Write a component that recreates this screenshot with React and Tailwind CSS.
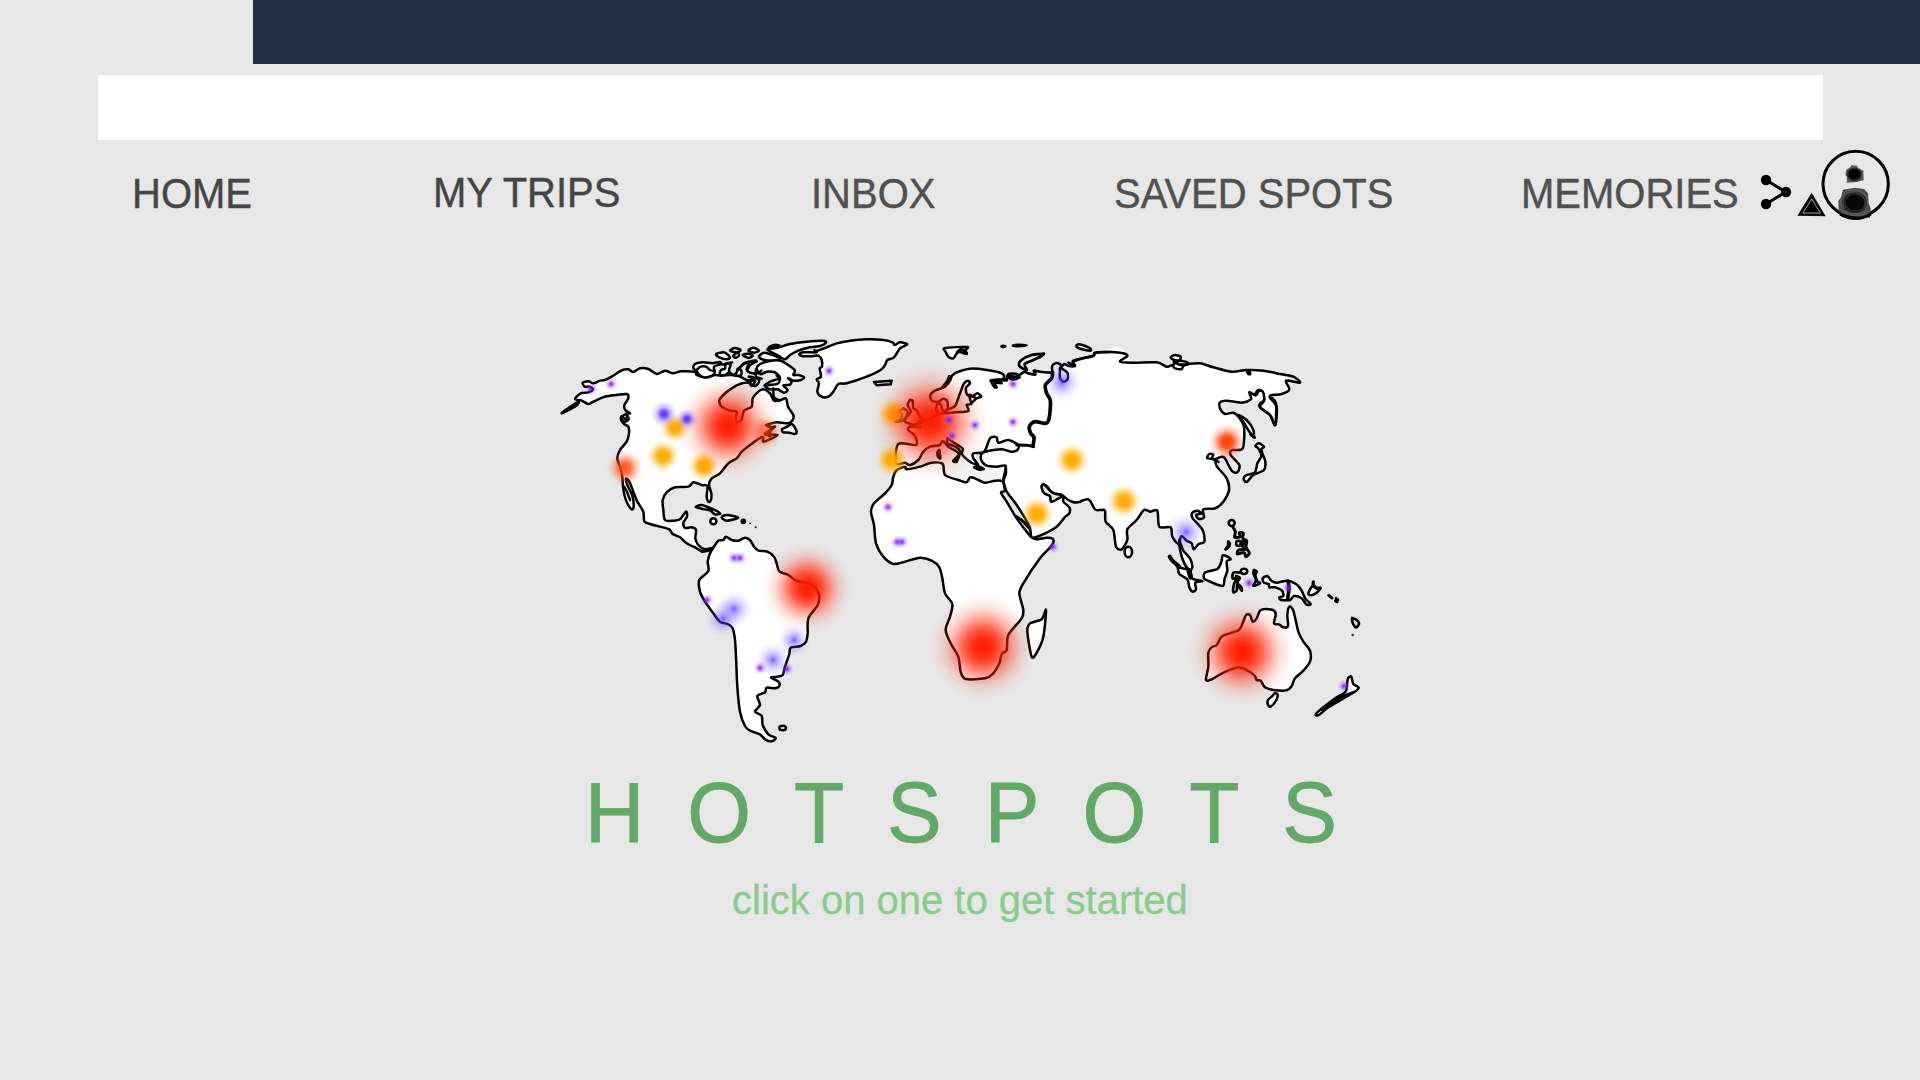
import React from "react";

/* Turns "x,y x,y ..." into a smooth path that passes through every point. */
function smooth(points, closed) {
  const p = points
    .trim()
    .split(/\s+/)
    .map((s) => s.split(",").map(Number));
  const n = p.length;
  const at = (i) => (closed ? p[(i + n) % n] : p[Math.max(0, Math.min(n - 1, i))]);
  let d = `M${p[0][0]} ${p[0][1]}`;
  const last = closed ? n : n - 1;
  const k = 7;
  for (let i = 0; i < last; i++) {
    const a = at(i - 1);
    const b = at(i);
    const c = at(i + 1);
    const e = at(i + 2);
    d += `C${b[0] + (c[0] - a[0]) / k} ${b[1] + (c[1] - a[1]) / k} ${c[0] - (e[0] - b[0]) / k} ${c[1] - (e[1] - b[1]) / k} ${c[0]} ${c[1]}`;
  }
  return closed ? d + "Z" : d;
}

const Land = ({ p }) => <path d={smooth(p, true)} fill="#fff" />;
const Area = ({ p }) => <path d={smooth(p, true)} fill="#fff" stroke="none" />;
const Sea = ({ p, c = "#e7e7e7" }) => <path d={smooth(p, true)} fill={c} stroke="none" />;
const Line = ({ p, w = 7.5 }) => <path d={smooth(p, false)} fill="none" strokeWidth={w} />;
const Ink = ({ p }) => <path d={smooth(p, true)} fill="#000" />;

/* Each map region is drawn on its own triple-size grid. */
const Region = ({ x, y, children }) => (
  <g transform={`translate(${x} ${y}) scale(0.33333)`} stroke="#000" strokeWidth="7.5" strokeLinejoin="round" strokeLinecap="round">
    {children}
  </g>
);

function NorthAmerica() {
  return (
    <>
      <Region x={550} y={330}>
        <Land p="75,207 92,190 115,187 129,178 118,170 104,170 98,158 115,154 130,160 150,152 165,150 185,140 215,121 235,118 250,126 270,115 295,117 320,132 345,122 368,130 395,124 435,126 440,135 465,142 490,135 515,137 545,135 570,140 590,150 615,152 605,168 596,158 570,162 545,175 520,195 508,212 515,230 540,242 560,245 557,266 563,277 575,268 582,242 605,230 608,205 625,185 640,178 660,190 672,212 692,210 708,205 714,230 730,255 728,270 715,280 680,277 650,285 665,292 675,290 661,303 660,313 683,315 665,325 640,335 640,322 628,325 600,345 575,365 560,385 535,400 510,430 485,445 477,465 484,490 482,512 475,515 470,500 472,468 455,465 430,457 415,470 375,472 350,487 338,510 340,540 345,570 370,572 390,568 408,545 411,560 400,578 405,594 425,592 438,600 436,625 445,645 465,658 490,653 475,662 455,663 440,655 410,640 390,622 368,612 358,598 330,590 300,582 283,574 280,545 262,515 250,485 238,455 228,446 232,465 247,498 251,530 245,538 232,520 224,498 219,470 217,440 212,415 202,385 210,360 230,335 237,310 235,290 222,282 213,270 215,258 228,270 232,252 240,250 226,240 223,225 235,205 230,192 200,195 165,200 130,215 115,222 95,212" />
        <Ink p="35,250 50,238 85,216 80,226 60,238" />
        <Line p="230,250 214,262 222,275 236,268 230,252" />
        <Line p="222,470 232,488 240,510" />
        <Line p="650,285 665,295 655,305 645,312 660,318" w={9} />
        <Land p="696,298 712,290 724,282 733,290 740,307 733,312 718,308 700,307" />
        <Land p="437,531 455,525 480,534 500,543 511,551 495,553 480,541 455,536" />
        <Land p="515,562 530,555 565,563 530,572" />
        <circle cx="490" cy="574" r="9" fill="#fff" />
        <circle cx="580" cy="574" r="5" />
        <circle cx="600" cy="580" r="1" strokeWidth="3" />
        <circle cx="617" cy="592" r="1" strokeWidth="4" />
      </Region>
      <Region x={670} y={320}>
        <Land p="80,153 70,145 75,132 100,127 128,130 148,126 153,132 132,140 134,158 125,168 100,172 85,162" />
        <Line p="82,148 92,140 108,140 120,150 134,153" />
        <Land p="150,165 153,150 165,146 167,131 182,131 177,152 187,164 200,158 203,146 214,152 212,166 190,165 175,158 168,164" />
        <Line p="150,133 165,133 186,127" />
        <Line p="205,148 220,132 240,125 258,122" w={9} />
        <Land p="150,98 165,98 180,112 170,118 148,112 138,103" />
        <Land p="180,92 195,84 212,90 200,97" />
        <Land p="190,107 205,97 206,108 196,113" />
        <Land p="235,92 250,83 267,92 252,98" />
        <Land p="218,105 235,101 248,107 235,114" />
        <Land p="293,87 320,84 360,72 410,65 460,62 468,68 450,78 420,82 385,92 360,105 345,118 325,107 300,94" />
        <Ink p="296,82 312,75 328,76 312,84" />
        <Land p="270,105 283,98 305,104 330,117 310,122 280,119 267,112" />
        <Land p="262,152 263,138 280,128 302,122 332,122 350,132 362,140 375,152 370,165 385,165 402,172 392,180 370,182 354,174 364,184 360,194 340,196 353,210 342,218 322,208 300,208 284,198 300,195 322,192 330,178 326,166 312,156 290,155 272,163" />
        <Line p="284,196 302,184 326,176 320,166" />
        <Line p="232,150 240,136 260,124" />
        <Line p="236,132 230,148 240,158 262,160 274,152" />
        <Line p="236,170 250,176 240,190 256,198 268,182 250,172 236,170" />
        <Line p="258,148 258,170 275,176" />
        <Line p="310,205 312,232 330,242" />
        <Land p="440,93 470,82 500,70 540,62 590,58 640,60 668,67 674,75 690,67 712,73 690,85 672,112 652,120 645,135 632,150 590,170 530,190 505,192 490,215 475,230 455,230 442,215 447,190 440,178 453,170 449,145 456,140 455,120 445,107 420,109 395,108 388,103 400,97 440,97 433,90" />
        <path d="M612 186L665 182L662 193L620 196Z" fill="#e7e7e7" />
      </Region>
    </>
  );
}

function SouthAmerica() {
  return (
    <Region x={680} y={500}>
      <Line p="66,155 85,150 100,146" w={9} />
      <Land p="100,143 115,122 130,120 138,110 155,120 175,122 195,113 210,120 222,140 235,152 262,155 282,170 290,190 298,214 325,225 350,243 385,250 405,262 417,285 413,315 385,355 383,400 378,425 362,438 332,443 328,462 315,500 308,525 290,530 273,533 295,545 298,558 285,565 260,563 255,577 232,588 240,615 225,635 245,648 248,675 265,703 287,714 275,724 255,718 240,703 210,692 195,678 180,635 172,560 168,470 165,420 158,385 145,373 120,365 100,340 75,305 60,275 58,240 85,213 83,185 90,160" />
      <ellipse cx="308" cy="684" rx="10" ry="7" fill="#e7e7e7" />
    </Region>
  );
}

function Africa() {
  return (
    <Region x={860} y={450}>
      <Sea c="#f1f1f1" p="140,58 180,48 215,38 248,20 300,-10 350,30 380,42 437,48 430,95 405,92 375,98 345,85 330,82 320,97 255,75 240,60" />
      <Land p="135,50 110,60 100,80 95,105 75,130 42,160 33,185 42,225 48,280 70,320 100,342 135,335 180,323 215,332 238,352 247,385 255,430 277,462 270,500 257,540 272,580 295,620 302,665 317,687 375,685 400,670 418,640 425,612 440,600 445,555 485,505 490,480 478,430 490,400 540,325 570,293 580,278 578,266 560,263 530,268 515,262 500,245 470,205 440,155 423,128 434,122 430,95 405,92 375,98 345,85 330,82 320,97 295,90 255,75 248,42 215,38 180,50 140,58" />
      <Land p="558,480 545,508 510,520 502,545 515,620 530,608 550,560" />
    </Region>
  );
}

function EuropeLand() {
  return (
    <Region x={860} y={330}>
      <Area p="265,140 280,130 330,115 380,120 430,132 440,145 490,125 575,125 640,95 700,80 800,70 900,400 640,520 437,450 437,408 410,410 375,405 362,385 365,370 385,363 472,360 475,345 445,330 415,338 410,322 390,325 375,355 350,370 345,400 320,388 305,352 255,330 210,350 190,365 175,390 150,405 108,400 115,342 168,345 165,318 145,300 178,292 230,255 270,200 225,182 255,170" />
      <Sea p="275,240 290,225 300,190 318,153 330,160 318,175 335,200 350,195 322,220 322,242 290,248" />
      <Sea c="#f3f3f3" p="385,363 390,325 410,322 415,338 445,330 475,345 472,360 455,365 425,358" />
    </Region>
  );
}

function EuropeCoast() {
  return (
    <Region x={860} y={330}>
      <Line p="275,138 290,127 330,116 380,120 425,130 432,143 415,155 393,150 402,170 410,172 404,158 425,160" />
      <Line p="393,152 412,150 440,150" w={10} />
      <Line p="440,148 446,132 470,132 478,143 455,148 445,138 470,140 492,126 505,130 526,134 522,122 545,126 577,128" w={8} />
      <Line p="275,138 270,152 255,170 225,182 211,195 215,212 235,216 250,206 262,215 262,238 248,242 243,225 232,222 230,244 250,250 290,247 325,243 320,225 332,222 348,206 364,200 352,190 338,198 328,195 334,222" />
      <Line p="268,140 262,155 248,172" w={10} />
      <Line p="262,238 285,228 300,190 312,160 324,152 330,160 318,174 322,195 345,202" />
      <Line p="245,250 225,258 190,275 178,283 182,292 150,290 145,300 165,318 168,345 115,342 108,400 135,398 150,405 175,390 190,365 210,350 240,345 248,333 265,350 290,365 298,378 285,395" />
      <Line p="262,325 285,340 308,356 306,372 330,395 355,405 340,385 340,370 372,366 390,325 410,322 415,338 445,330 475,345 472,360 455,365 425,358 385,363 366,370 363,388 378,406 410,410 437,408 430,450 437,478" />
      <Line p="262,325 262,340 290,352 300,370 280,392 290,395 296,380" w={8} />
      <Line p="470,345 500,346 521,350" w={9} />
      <Line p="578,128 575,145 556,165 560,190 571,212 568,262 558,280 524,275 508,290 512,310 522,322 519,348" w={11} />
      <Line p="578,130 576,110 585,100 600,102 604,112 612,102 626,108 645,108 640,95 665,86 700,78 706,68 750,66" />
      <Line p="600,115 600,145 612,155 623,147 622,128 606,116" />
      <Ink p="232,368 238,360 241,385 234,380" />
      <Ink p="342,412 357,410 372,417 358,419" />
      <Line p="150,210 143,225 153,245 140,260 135,275 165,284 187,268 178,258 170,240 160,235 158,212 150,210" />
      <Line p="130,235 118,245 126,255 120,268 108,275 128,272 140,258 142,244 130,235" />
      <Land p="255,54 322,51 316,60 320,72 300,66 290,70 280,85 265,80 257,66" />
      <Line p="292,66 305,58 318,68" w={9} />
      <Ink p="424,49 430,47 436,49 430,51" />
      <Ink p="458,47 475,44 500,46 475,49" />
      <Land p="650,45 665,44 690,55 692,62 675,60 652,52" />
      <Line p="552,71 515,75 482,92 478,108 500,120 494,102 520,90 545,78 552,71" w={8} />
    </Region>
  );
}

function Asia() {
  return (
    <>
      <Region x={1040} y={340}>
        <Area p="62,85 105,75 160,47 215,36 262,45 240,65 350,67 380,80 480,70 575,95 670,92 780,128 740,122 748,148 692,168 600,190 540,187 540,205 595,235 612,260 608,325 575,330 530,355 525,372 560,415 567,450 525,505 490,510 460,520 493,605 460,628 445,602 420,590 397,590 392,560 358,560 352,512 312,510 262,565 245,628 228,620 220,570 195,512 165,510 145,478 105,487 70,468 0,540 -120,400 -30,150 20,130" />
        <Land p="690,168 708,190 705,255 690,225 660,202 672,182 668,158 655,150 648,166 700,160" />
        <Area p="600,190 640,165 670,155 740,150 690,172 672,176" />
        <Line p="85,68 104,76 100,62 160,47 165,38 215,36 250,40 262,48 240,65 280,68 350,67 380,80 400,75 440,72 480,70 520,82 575,95 620,90 670,92 720,102 760,110 780,128 738,122 748,148 725,162 692,166 692,176 710,200 706,255 690,225 660,202 660,190 672,182 670,158 658,150 648,166 628,157 633,178 605,188 560,182 540,187 540,205 555,222 580,218 597,232 612,260 608,325 575,330 572,345 598,375 592,397 575,392 552,352 530,357 530,378 560,415 567,450 550,485 525,505 490,508 492,532 477,537 468,525 484,520 472,512 457,518 458,535 488,570 493,605 476,612 461,628 455,610 440,602 424,588 415,612 397,590 392,562 358,560 352,512 330,515 312,510 290,540 262,568 262,600 245,628 228,620 220,570 197,545 195,512 182,510 165,508 145,478 105,487 70,466" />
        <path d="M62 464L72 468L69 478Z" />
        <Ink p="621,94 628,94 631,102 625,102" />
        <Land p="392,52 405,45 422,50 418,60 402,60" />
        <Land p="400,80 405,68 420,62 444,68 430,78 425,87 408,86" />
        <Line p="402,66 420,74 443,73" w={9} />
        <Land p="595,225 620,240 640,270 640,290 625,270 610,245" />
        <Line p="632,282 643,292" w={10} />
        <Land p="646,318 657,310 672,320 664,328 668,342 676,365 672,390 640,405 620,426 611,416 620,405 645,397 652,370 664,348 655,325" />
        <ellipse cx="265" cy="636" rx="11" ry="16" fill="#fff" />
        <Line p="530,357 502,355 508,342 520,344 516,356 536,366" />
      </Region>
      <Region x={860} y={450}>
        <Area p="430,95 438,40 600,60 660,150 608,148 628,185 590,230 515,262 505,220" />
        <Line p="437,48 438,70 430,95 440,125 470,165 508,228 515,262 540,257 590,230 614,202 628,190 628,172 610,155 608,138 575,155 570,138 555,130 545,112 550,103 562,110 577,128 605,135 625,150 640,157 662,156" />
        <Line p="470,200 490,215 508,235" w={9} />
        <Sea p="608,138 575,153 570,138 555,130 548,112 562,112 577,128" />
        <Line p="608,138 575,155 570,138 553,130 545,112 552,103 577,128 605,135" />
      </Region>
    </>
  );
}

function Oceania() {
  return (
    <Region x={1140} y={500}>
      <Land p="118,120 120,150 133,190 150,210 157,200 150,175 130,152 122,132" />
      <Land p="92,175 112,200 118,222 142,238 148,262 157,275 168,268 166,248 187,243 157,236 150,210 118,202" />
      <Line p="89,170 97,182 118,200" w={12} />
      <Line p="146,212 152,232" w={14} />
      <Land p="248,166 262,170 272,178 260,184 262,212 254,235 250,257 232,254 206,243 192,235 196,217 232,207 244,186" />
      <circle cx="275" cy="69" r="9" fill="#e7e7e7" />
      <Line p="278,80 286,95 284,112 300,110 298,98 310,100 308,115 320,122 318,142 328,158 318,170 312,158 292,162 296,150 318,148" w={9} />
      <circle cx="296" cy="130" r="8" fill="#e7e7e7" />
      <Line p="302,130 314,122 308,140 320,146" w={9} />
      <Ink p="264,124 270,132 264,144 256,148 264,136" />
      <Line p="300,218 280,218 278,236 290,234 282,252 280,276 290,272 292,254 305,272 304,262 292,248 300,234 288,228" w={8} />
      <ellipse cx="312" cy="214" rx="10" ry="8" fill="#e7e7e7" />
      <Line p="342,210 350,214 346,226 352,244 360,250 340,257 348,240 340,220 342,210" w={8} />
      <Land p="368,235 382,228 394,242 410,248 443,242 468,252 484,270 496,296 512,312 500,314 484,294 462,288 450,300 424,300 418,292 430,288 426,272 405,262 388,262 386,252 372,248" />
      <Line p="444,243 447,265 443,297" w={11} />
      <Land p="516,260 530,264 542,264 528,280 512,286 505,280" />
      <Line p="520,246 520,256 532,266" w={10} />
      <Line p="566,286 576,294" w={9} />
      <Line p="588,302 592,300" w={12} />
      <path d="M588 294L592 306" />
      <Line p="636,354 650,360 657,372 648,382 638,368 636,354" w={8} />
      <circle cx="638" cy="405" r="1" strokeWidth="5" />
      <Land p="198,540 205,500 205,458 215,442 230,435 245,410 270,400 297,390 308,370 318,345 330,345 338,365 350,355 360,332 378,327 402,332 407,345 402,370 418,374 430,382 444,378 442,345 448,320 460,332 475,395 490,425 510,452 510,485 490,512 465,535 455,558 440,571 400,570 375,562 362,542 350,540 345,528 325,513 295,502 250,518 215,538" />
      <Land p="384,600 397,588 405,580 413,584 408,602 392,620 384,614" />
      <Land p="622,545 625,533 634,530 640,552 656,563 642,577 605,598 565,622 537,645 527,643 550,622 590,592 617,575" />
      <Line p="640,577 605,590 575,610 545,628" w={9} />
    </Region>
  );
}

const SPOTS = [
  ["orange", 675, 428, 16],
  ["orange", 663, 456, 17],
  ["orange", 704, 466, 17],
  ["orange", 894, 414, 18],
  ["orange", 892, 460, 18],
  ["orange", 1072, 460, 18],
  ["orange", 1037, 514, 18],
  ["orange", 1124, 501, 18],
  ["red", 728, 426, 52],
  ["red", 930, 422, 60],
  ["red", 807, 588, 46],
  ["red", 983, 647, 54],
  ["red", 1242, 652, 54],
  ["ember", 625, 468, 19],
  ["emberSoft", 765, 432, 18],
  ["emberHot", 1227, 442, 19],
  ["blueHot", 664, 414, 14],
  ["blueHot", 687, 419, 12],
  ["blue", 734, 609, 19],
  ["blue", 723, 619, 18],
  ["blue", 773, 660, 18],
  ["blue", 794, 640, 17],
  ["blue", 1062, 382, 20],
  ["blue", 1186, 532, 20],
  ...[
    [591, 389], [611, 384], [829, 371], [734, 558], [740, 558], [707, 600], [760, 668], [787, 669],
    [1013, 384], [949, 420], [975, 425], [952, 436], [1013, 422], [888, 507], [897, 542], [902, 542],
    [1053, 547], [1249, 583], [1288, 588], [1344, 686],
  ].map(([x, y]) => ["purple", x, y, 7]),
];

const GRADIENTS = {
  red: [["0%", "#ff1c00", 1], ["18%", "#ff1e00", 0.93], ["35%", "#ff2000", 0.72], ["52%", "#ff2404", 0.42], ["70%", "#ff2a10", 0.17], ["85%", "#ff3010", 0.05], ["100%", "#ff3010", 0]],
  ember: [["0%", "#ff4a14", 0.95], ["30%", "#ff4a14", 0.78], ["60%", "#ff4a14", 0.3], ["80%", "#ff4a14", 0.08], ["100%", "#ff4a14", 0]],
  emberSoft: [["0%", "#ff4010", 0.75], ["40%", "#ff4010", 0.5], ["75%", "#ff4010", 0.12], ["100%", "#ff4010", 0]],
  emberHot: [["0%", "#ff3c00", 1], ["30%", "#ff3c00", 0.88], ["60%", "#ff3c00", 0.35], ["80%", "#ff3c00", 0.1], ["100%", "#ff3c00", 0]],
  orange: [["0%", "#ffab00", 1], ["30%", "#ffab00", 0.93], ["50%", "#ffae08", 0.62], ["70%", "#ffb010", 0.25], ["85%", "#ffb010", 0.07], ["100%", "#ffb010", 0]],
  blueHot: [["0%", "#5526ff", 1], ["25%", "#5a30ff", 0.8], ["50%", "#6a45ff", 0.35], ["75%", "#6a45ff", 0.1], ["100%", "#6a45ff", 0]],
  blue: [["0%", "#5030ff", 0.75], ["20%", "#5a3cff", 0.48], ["50%", "#6a50ff", 0.22], ["75%", "#6a50ff", 0.07], ["100%", "#6a50ff", 0]],
  purple: [["0%", "#7a10ff", 0.95], ["25%", "#8020ff", 0.65], ["60%", "#9040ff", 0.2], ["100%", "#9040ff", 0]],
};

function WorldMap() {
  return (
    <svg className="ml-[550px] block h-[430px] w-[840px]" viewBox="550 325 840 430" role="img" aria-label="World map">
      <defs>
        {Object.entries(GRADIENTS).map(([id, stops]) => (
          <radialGradient id={id} key={id}>
            {stops.map(([o, c, a]) => (
              <stop key={o} offset={o} stopColor={c} stopOpacity={a} />
            ))}
          </radialGradient>
        ))}
      </defs>
      <NorthAmerica />
      <SouthAmerica />
      <Africa />
      <EuropeLand />
      <Asia />
      <EuropeCoast />
      <Oceania />
      {SPOTS.map(([kind, x, y, r], i) => (
        <circle key={i} cx={x} cy={y} r={r} fill={`url(#${kind})`} className="cursor-pointer" />
      ))}
    </svg>
  );
}

function HeaderIcons() {
  return (
    <svg className="ml-auto block h-20 w-[165px]" viewBox="45 18 495 240" aria-hidden="true">
      <path d="M78 120L138 156L78 192" fill="none" stroke="#000" strokeWidth="9" />
      <circle cx="78" cy="120" r="15.5" />
      <circle cx="138" cy="156" r="15.5" />
      <circle cx="78" cy="192" r="15.5" />
      <path d="M215 158L257 229L172 227Z" fill="#0a0a0a" />
      <path d="M215 177L241 219L189 219Z" fill="#000" stroke="#e7e7e7" strokeWidth="2" />
      <circle cx="347" cy="132" r="98" fill="none" stroke="#000" strokeWidth="9" />
      <path d="M331 82L334 76L351 77L354 84L370 92L371 121L360 123L352 126L320 128L321 110L316 104L319 89Z" fill="#555" />
      <ellipse cx="343" cy="103" rx="22" ry="20" fill="#1a1a1a" />
      <ellipse cx="343" cy="102" rx="16" ry="15" />
      <path d="M309 149L345 143L372 147L384 160L386 190L392 205L390 233L330 227L296 215L295 182L303 172Z" fill="#4a4a4a" />
      <ellipse cx="344" cy="188" rx="37" ry="32" fill="#262626" />
      <ellipse cx="345" cy="188" rx="28" ry="24" fill="#080808" />
      <g fill="none" stroke="#8a8a8a" strokeWidth="1.2">
        <path d="M304 200C296 160 320 146 345 150S384 165 382 196" />
        <path d="M312 205C302 170 322 154 346 158S378 178 376 204" stroke="#666" />
        <path d="M300 208C320 226 360 222 386 214" />
        <path d="M304 216C326 230 362 226 388 220" />
        <path d="M322 112C318 96 330 84 346 86S366 98 364 118" stroke="#555" />
      </g>
      <path d="M300 222C328 240 366 240 392 222" fill="none" stroke="#000" strokeWidth="9" />
    </svg>
  );
}

const label =
  "origin-[0_34px] scale-y-[1.04] whitespace-nowrap text-[40px] leading-10 [-webkit-text-stroke:0.4px_currentColor]";

export default function App() {
  return (
    <div className="h-[1080px] w-[1920px] overflow-hidden bg-[#e7e7e7] font-['Liberation_Sans',Arial,sans-serif]">
      <header>
        <div className="ml-[253px] h-16 bg-[#263049]" />
        <div className="mt-[11px] ml-[98px] h-[65px] w-[1725px] bg-white" />
        <nav className="grid h-[185px] grid-cols-[301px_378px_303px_407px_1fr] pt-[6px] pl-[132px] text-[#4a4a4a]">
          <a className={`${label} mt-[28px] text-[#454545]`}>HOME</a>
          <a className={`${label} mt-[27px] text-[#454545]`}>MY TRIPS</a>
          <a className={`${label} mt-[28px] text-[#505050]`}>INBOX</a>
          <a className={`${label} mt-[28px] text-[#505050]`}>SAVED SPOTS</a>
          <div className="flex">
            <a className={`${label} mt-[28px] text-[#505050]`}>MEMORIES</a>
            <HeaderIcons />
          </div>
        </nav>
      </header>
      <main>
        <WorldMap />
        <h1 className="mt-[19px] origin-[0_68px] scale-y-[1.04] pl-[585px] text-[82px] leading-[80px] tracking-[43px] whitespace-nowrap text-[#62a866] [-webkit-text-stroke:0.8px_currentColor]">
          HOTSPOTS
        </h1>
        <p className="mt-[26px] pl-[732px] text-[40px] leading-10 text-[#88cc8c] [-webkit-text-stroke:0.3px_currentColor]">click on one to get started</p>
      </main>
    </div>
  );
}
